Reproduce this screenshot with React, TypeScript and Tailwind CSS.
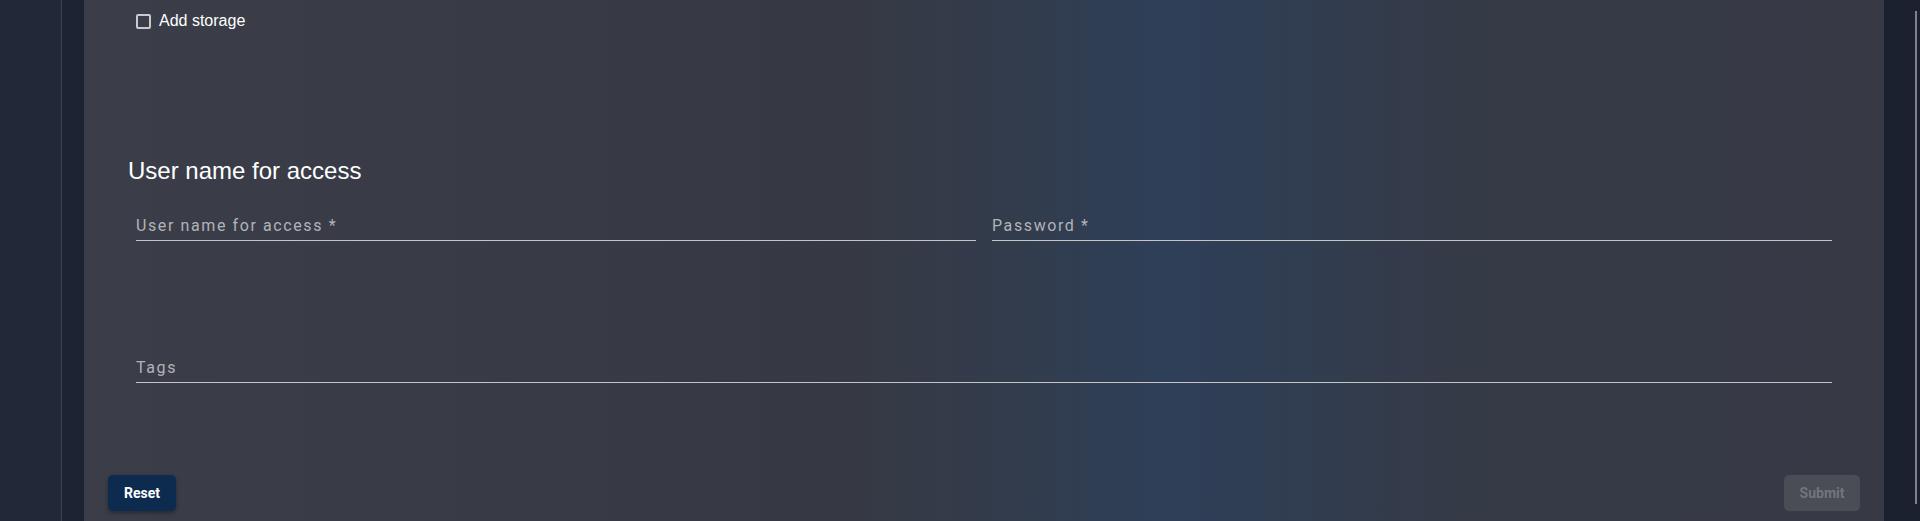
import { useState } from 'react'

interface FieldProps {
  label: string
  required?: boolean
}

function UnderlineField({ label, required }: FieldProps) {
  return (
    <div className="flex-1 border-b border-[#c4c5c9] pt-[1px] pb-[2px]">
      <label className="block font-['Roboto',sans-serif] text-[16px] leading-6 tracking-[0.1em] text-[#b1b3b8]">
        {label}
        {required && ' *'}
      </label>
    </div>
  )
}

export default function App() {
  const [addStorage, setAddStorage] = useState(false)

  return (
    <div className="flex h-[521px] w-full overflow-hidden bg-[#1c2130]">
      {/* Left nav rail */}
      <div className="w-[62px] shrink-0 border-r border-[#394258] bg-[#212838]" />
      <div className="w-[22px] shrink-0 bg-[#1e2333]" />

      {/* Form panel */}
      <div className="flex flex-1 flex-col bg-[linear-gradient(90deg,#3b3e49_0%,#383b45_25%,#363943_42%,#323c4d_52%,#2e3f58_60%,#313d50_68%,#353a47_76%,#373a45_100%)] pt-[12px] pb-[10px] pl-[52px] pr-[52px]">
        {/* Add storage */}
        <label className="flex h-[18px] cursor-pointer items-center gap-[8px] font-['Liberation_Sans',Arial,sans-serif] text-[16px] text-white">
          <span
            onClick={() => setAddStorage(!addStorage)}
            className="block h-[15px] w-[15px] rounded-[2px] border-2 border-[#c9cacd]"
          />
          Add storage
        </label>

        <h2 className="mt-[127px] ml-[-8px] font-['Liberation_Sans',Arial,sans-serif] text-[24px] leading-[28px] text-white">
          User name for access
        </h2>

        <div className="mt-[28px] flex gap-4">
          <UnderlineField label="User name for access" required />
          <UnderlineField label="Password" required />
        </div>

        <div className="mt-[114px] flex">
          <UnderlineField label="Tags" />
        </div>

        {/* Actions */}
        <div className="mt-[92px] -mx-[28px] flex items-center justify-between">
          <button className="h-9 rounded-[5px] bg-[#0d2a4f] px-4 font-['Roboto',sans-serif] text-[14px] font-bold text-white shadow-[0_2px_4px_rgba(0,0,0,0.35)]">
            Reset
          </button>
          <button
            disabled
            className="h-9 w-[76px] rounded-[5px] bg-[#4a4d55] font-['Roboto',sans-serif] text-[14px] font-bold text-[#72757c]"
          >
            Submit
          </button>
        </div>
      </div>

      {/* Right scroll gutter */}
      <div className="flex w-[36px] shrink-0 justify-end pr-[3px] pt-[11px] pb-[17px]">
        <div className="w-[2px] bg-[#80838a]" />
      </div>
    </div>
  )
}
